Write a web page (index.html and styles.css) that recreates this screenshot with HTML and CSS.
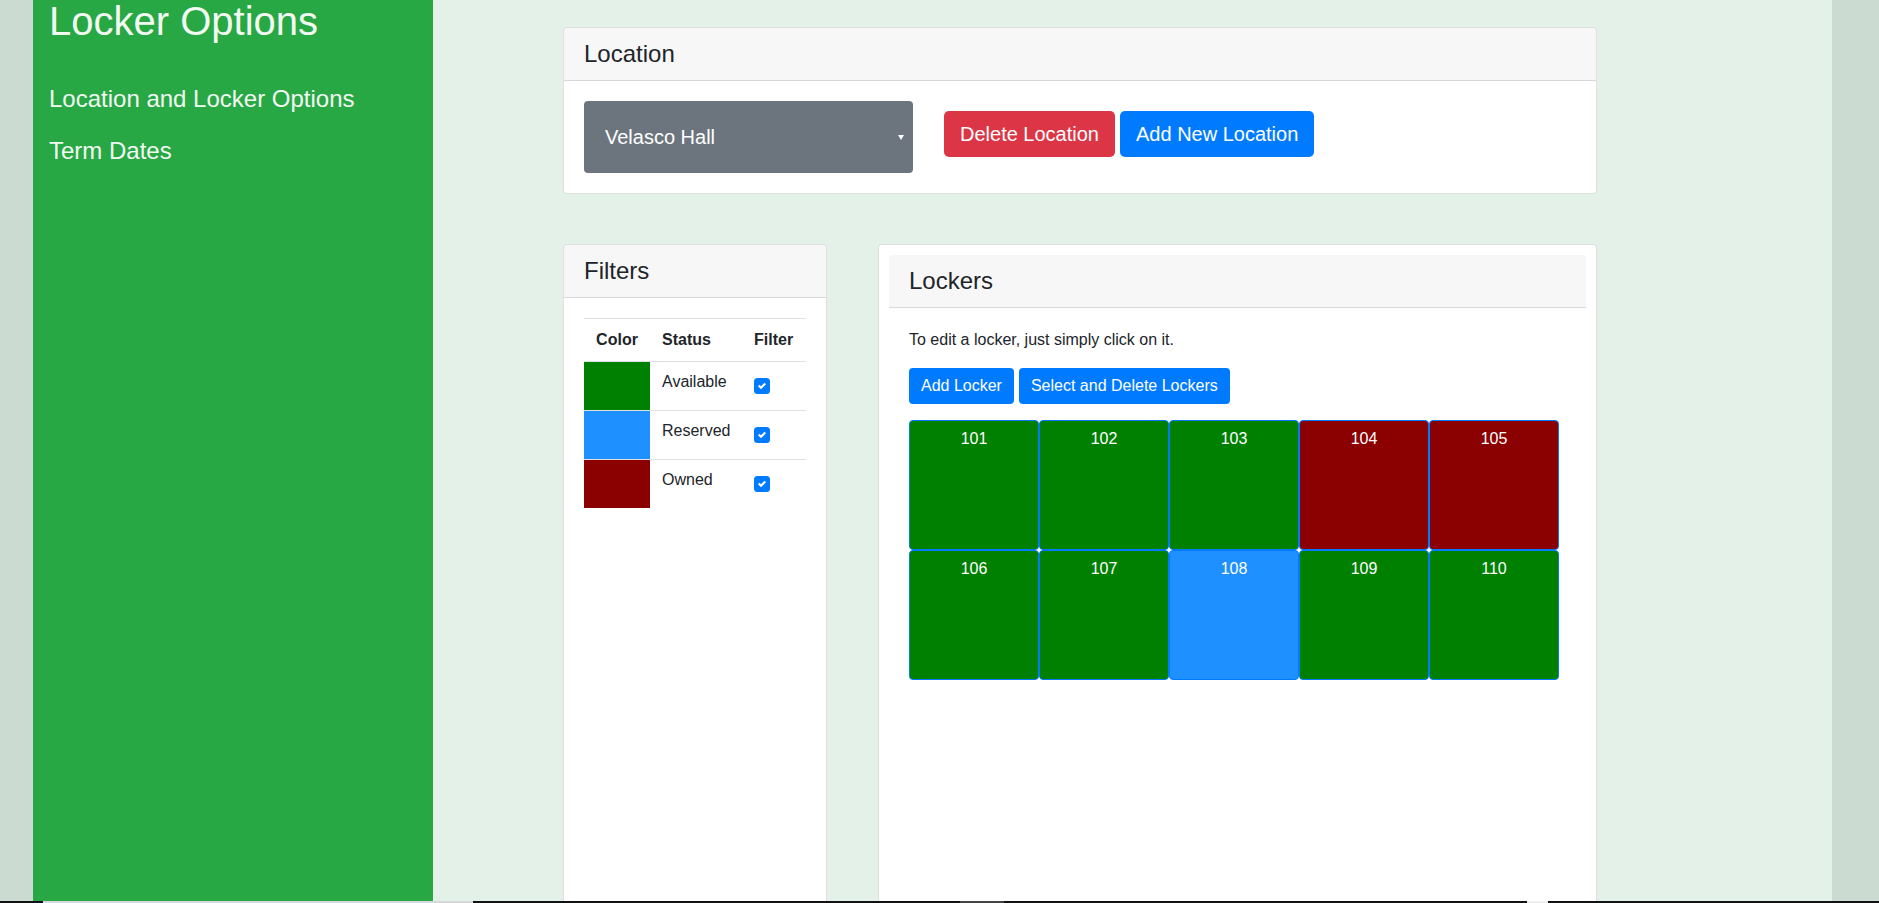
FILE: index.html
```html
<!DOCTYPE html>
<html lang="en">
<head>
<meta charset="utf-8">
<title>Locker Options</title>
<link rel="stylesheet" href="styles.css">
</head>
<body>
<div class="page">
  <aside class="sidebar">
    <h1 class="side-title">Locker Options</h1>
    <nav class="side-nav">
      <a class="side-link" href="#">Location and Locker Options</a>
      <a class="side-link" href="#">Term Dates</a>
    </nav>
  </aside>
  <main class="main">
    <div class="content">
      <section class="card">
        <div class="card-header"><h4 class="card-title">Location</h4></div>
        <div class="loc-body">
          <div class="select"><span>Velasco Hall</span><span class="caret"></span></div>
          <div class="btn-row loc-buttons">
            <button class="btn btn-lg btn-danger">Delete Location</button>
            <button class="btn btn-lg btn-primary">Add New Location</button>
          </div>
        </div>
      </section>

      <div class="lower">
        <section class="card filters">
          <div class="card-header"><h4 class="card-title">Filters</h4></div>
          <div class="filters-body">
            <div class="ftable">
              <div class="frow fhead">
                <div class="fcell fcolor-head">Color</div>
                <div class="fcell">Status</div>
                <div class="fcell">Filter</div>
              </div>
              <div class="frow">
                <div class="swatch sw-available"></div>
                <div class="fcell ftext">Available</div>
                <div class="fcell fcheck">
                  <svg class="check" width="16" height="16" viewBox="0 0 16 16"><rect width="16" height="16" rx="3.5" fill="#007bff"/><path transform="translate(4 4)" d="M6.564.75l-3.59 3.612-1.538-1.55L0 4.26 2.974 7.25 8 2.193z" fill="#fff"/></svg>
                </div>
              </div>
              <div class="frow">
                <div class="swatch sw-reserved"></div>
                <div class="fcell ftext">Reserved</div>
                <div class="fcell fcheck">
                  <svg class="check" width="16" height="16" viewBox="0 0 16 16"><rect width="16" height="16" rx="3.5" fill="#007bff"/><path transform="translate(4 4)" d="M6.564.75l-3.59 3.612-1.538-1.55L0 4.26 2.974 7.25 8 2.193z" fill="#fff"/></svg>
                </div>
              </div>
              <div class="frow">
                <div class="swatch sw-owned"></div>
                <div class="fcell ftext">Owned</div>
                <div class="fcell fcheck">
                  <svg class="check" width="16" height="16" viewBox="0 0 16 16"><rect width="16" height="16" rx="3.5" fill="#007bff"/><path transform="translate(4 4)" d="M6.564.75l-3.59 3.612-1.538-1.55L0 4.26 2.974 7.25 8 2.193z" fill="#fff"/></svg>
                </div>
              </div>
            </div>
          </div>
        </section>

        <section class="card lockers">
          <div class="card-header inner-header"><h4 class="card-title">Lockers</h4></div>
          <div class="lockers-body">
            <p class="hint">To edit a locker, just simply click on it.</p>
            <div class="btn-row">
              <button class="btn btn-primary">Add Locker</button>
              <button class="btn btn-primary">Select and Delete Lockers</button>
            </div>
            <div class="locker-grid">
              <div class="locker available">101</div>
              <div class="locker available">102</div>
              <div class="locker available">103</div>
              <div class="locker owned">104</div>
              <div class="locker owned">105</div>
              <div class="locker available">106</div>
              <div class="locker available">107</div>
              <div class="locker reserved">108</div>
              <div class="locker available">109</div>
              <div class="locker available">110</div>
            </div>
          </div>
        </section>
      </div>
    </div>
  </main>
</div>
<div class="taskbar-edge">
  <span class="seg seg-black w43"></span>
  <span class="seg seg-light w430"></span>
  <span class="seg seg-black w487"></span>
  <span class="seg seg-dark w44"></span>
  <span class="seg seg-black w523"></span>
  <span class="seg seg-pale w21"></span>
  <span class="seg seg-black grow"></span>
</div>
</body>
</html>
```

FILE: styles.css
```css
* { box-sizing: border-box; }

html, body {
  margin: 0;
  height: 100%;
  overflow: hidden;
}

body {
  font-family: "Liberation Sans", Arial, sans-serif;
  font-size: 16px;
  line-height: 24px;
  color: #212529;
  background: #cbdbd2;
}

.page {
  display: flex;
  height: 100vh;
  padding: 0 47px 0 33px;
  background: #cbdbd2;
}

/* Sidebar */
.sidebar {
  width: 400px;
  flex: none;
  background: #28a745;
  padding-left: 16px;
  color: #f2faf2;
}

.side-title {
  margin: -3px 0 0;
  font-size: 40px;
  line-height: 48px;
  font-weight: 400;
}

.side-nav {
  display: flex;
  flex-direction: column;
  gap: 23px;
  margin-top: 39px;
}

.side-link {
  color: #f2faf2;
  text-decoration: none;
  font-size: 24px;
  line-height: 29px;
}

/* Main */
.main {
  flex: 1;
  background: #e4f1e9;
  padding: 27px 0 0 130px;
  overflow: hidden;
}

.content {
  width: 1034px;
}

.card {
  background: #fff;
  border: 1px solid rgba(0, 0, 0, 0.125);
  border-radius: 4px;
}

.card-header {
  background: rgba(0, 0, 0, 0.03);
  border-bottom: 1px solid rgba(0, 0, 0, 0.125);
  padding: 12px 20px;
  border-radius: 3px 3px 0 0;
}

.card-title {
  margin: 0;
  font-size: 24px;
  line-height: 28px;
  font-weight: 400;
  color: #212529;
}

.loc-body {
  display: flex;
  align-items: flex-start;
  padding: 20px;
}

.select {
  width: 329px;
  height: 72px;
  background: #6c757d;
  border-radius: 4px;
  color: #fff;
  font-size: 20px;
  display: flex;
  align-items: center;
  justify-content: space-between;
  padding: 0 9px 0 21px;
  margin-right: 31px;
}

.caret {
  width: 0;
  height: 0;
  border-left: 3px solid transparent;
  border-right: 3px solid transparent;
  border-top: 5px solid #fff;
}

.btn-row {
  display: flex;
  gap: 5px;
}

.loc-buttons {
  margin-top: 10px;
}

.btn {
  font-family: inherit;
  border: none;
  color: #fff;
  font-size: 16px;
  line-height: 24px;
  padding: 6px 12px;
  border-radius: 4px;
}

.btn-lg {
  font-size: 20px;
  line-height: 30px;
  padding: 8px 16px;
  border-radius: 5px;
}

.btn-danger { background: #dc3545; }
.btn-primary { background: #007bff; }

/* Lower row */
.lower {
  display: flex;
  gap: 51px;
  margin-top: 50px;
}

.filters {
  width: 264px;
  flex: none;
  height: 720px;
}

.filters-body {
  padding: 20px;
}

.ftable {
  display: flex;
  flex-direction: column;
}

.frow {
  display: grid;
  grid-template-columns: 66px 92px 65px;
  border-top: 1px solid #dee2e6;
  height: 49px;
}

.fhead {
  height: 43px;
  font-weight: 700;
  align-items: center;
}

.fcell {
  padding: 0 12px;
}

.fcolor-head {
  text-align: center;
}

.ftext {
  padding-top: 8px;
}

.fcheck {
  padding-top: 16px;
}

.check {
  display: block;
}

.swatch { height: 48px; }
.sw-available { background: #008000; }
.sw-reserved { background: #1e90ff; }
.sw-owned { background: #8b0000; }

.lockers {
  flex: 1;
  height: 720px;
  padding: 10px;
}

.inner-header {
  border-radius: 3px 3px 0 0;
}

.lockers-body {
  padding: 20px;
}

.hint {
  margin: 0 0 16px;
}

.locker-grid {
  display: grid;
  grid-template-columns: repeat(5, 130px);
  grid-auto-rows: 130px;
  margin-top: 16px;
}

.locker {
  border: 1px solid #007bff;
  border-radius: 4px;
  color: #fff;
  text-align: center;
  padding-top: 6px;
}

.locker.available { background: #008000; }
.locker.owned { background: #8b0000; }
.locker.reserved { background: #1e90ff; }

/* bottom edge strip (taskbar edge overlay) */
.taskbar-edge {
  position: fixed;
  left: 0;
  right: 0;
  bottom: 0;
  height: 2px;
  display: flex;
}

.seg { display: block; height: 2px; }
.seg-black { background: #111; }
.seg-light { background: #d8d8d8; }
.seg-dark { background: #444; }
.seg-pale { background: #eee; }
.w43 { width: 43px; }
.w430 { width: 430px; }
.w487 { width: 487px; }
.w44 { width: 44px; }
.w523 { width: 523px; }
.w21 { width: 21px; }
.grow { flex: 1; }
```
